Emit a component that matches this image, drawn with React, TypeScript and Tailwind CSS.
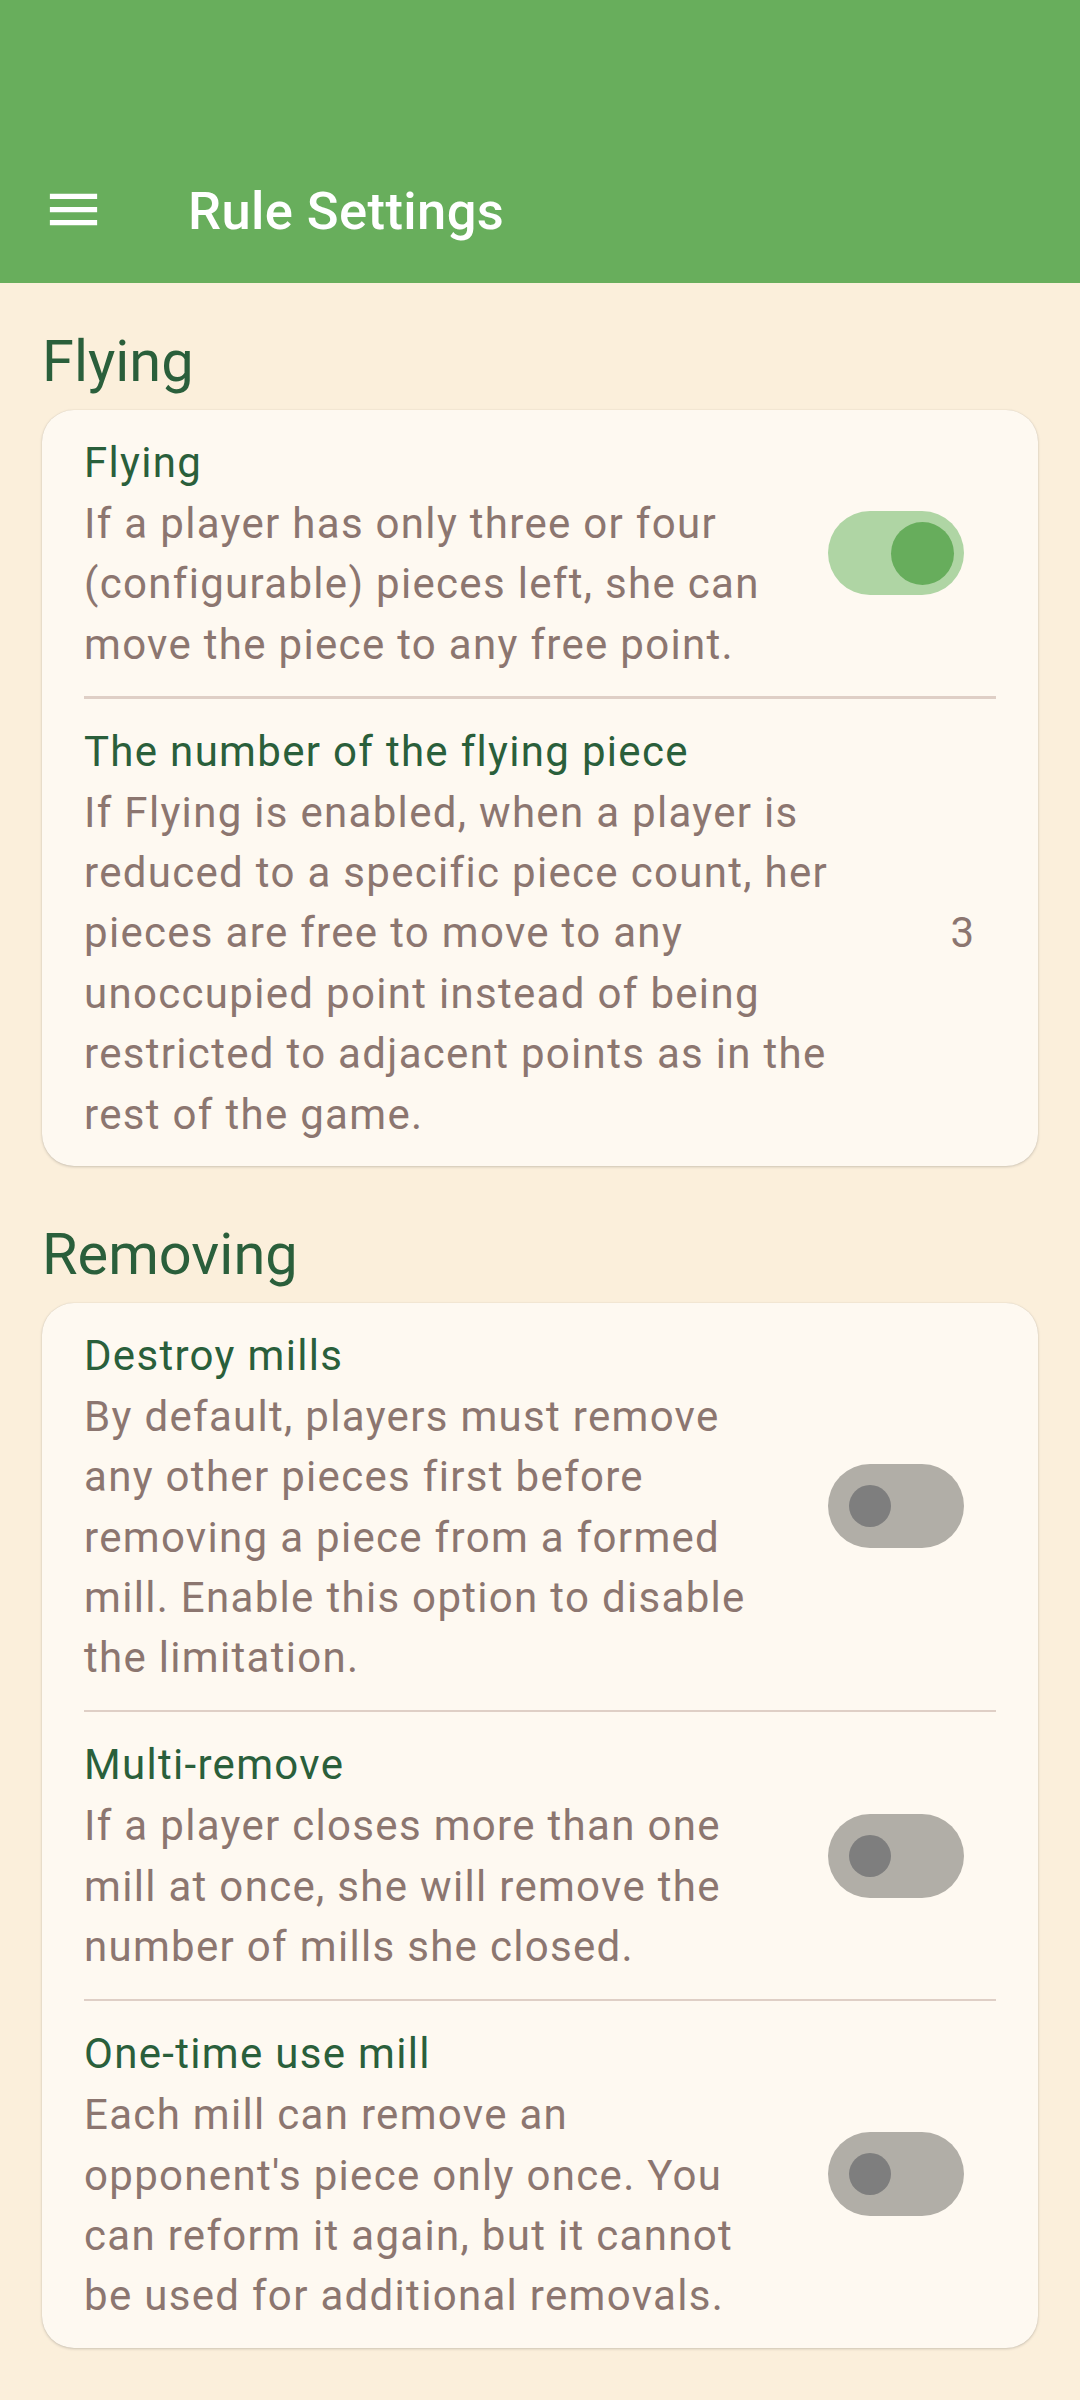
import { Fragment } from 'react'

type Setting = {
  title: string
  lines: string[]
  trailing: { kind: 'switch'; on: boolean } | { kind: 'value'; value: string }
}

type Section = {
  header: string
  items: Setting[]
}

const sections: Section[] = [
  {
    header: 'Flying',
    items: [
      {
        title: 'Flying',
        lines: [
          'If a player has only three or four',
          '(configurable) pieces left, she can',
          'move the piece to any free point.',
        ],
        trailing: { kind: 'switch', on: true },
      },
      {
        title: 'The number of the flying piece',
        lines: [
          'If Flying is enabled, when a player is',
          'reduced to a specific piece count, her',
          'pieces are free to move to any',
          'unoccupied point instead of being',
          'restricted to adjacent points as in the',
          'rest of the game.',
        ],
        trailing: { kind: 'value', value: '3' },
      },
    ],
  },
  {
    header: 'Removing',
    items: [
      {
        title: 'Destroy mills',
        lines: [
          'By default, players must remove',
          'any other pieces first before',
          'removing a piece from a formed',
          'mill. Enable this option to disable',
          'the limitation.',
        ],
        trailing: { kind: 'switch', on: false },
      },
      {
        title: 'Multi-remove',
        lines: [
          'If a player closes more than one',
          'mill at once, she will remove the',
          'number of mills she closed.',
        ],
        trailing: { kind: 'switch', on: false },
      },
      {
        title: 'One-time use mill',
        lines: [
          'Each mill can remove an',
          "opponent's piece only once. You",
          'can reform it again, but it cannot',
          'be used for additional removals.',
        ],
        trailing: { kind: 'switch', on: false },
      },
    ],
  },
]

function Toggle({ on }: { on: boolean }) {
  if (on) {
    return (
      <div className="flex h-[84px] w-[136px] items-center justify-end rounded-full bg-[#afd5a4] pr-[10.5px]">
        <div className="h-[63px] w-[63px] rounded-full bg-[#67ad5c]" />
      </div>
    )
  }
  return (
    <div className="flex h-[84px] w-[136px] items-center justify-start rounded-full bg-[#b1aea7] pl-[21px]">
      <div className="h-[42px] w-[42px] rounded-full bg-[#7e7e7e]" />
    </div>
  )
}

function SettingRow({ item }: { item: Setting }) {
  return (
    <div className="flex items-center px-[42px] py-[21px]">
      <div className="min-w-0 flex-1">
        <div className="text-[42px] leading-[63px] tracking-[1.31px] text-[#2a5f3b]">{item.title}</div>
        <div className="text-[42px] leading-[60.375px] tracking-[1.31px] text-[#8c7670]">
          {item.lines.map((line) => (
            <div key={line} className="whitespace-nowrap">
              {line}
            </div>
          ))}
        </div>
      </div>
      {item.trailing.kind === 'switch' ? (
        <div className="mr-[32px] shrink-0">
          <Toggle on={item.trailing.on} />
        </div>
      ) : (
        <div className="mr-[22px] shrink-0 text-[42px] leading-[63px] text-[#8c7670]">{item.trailing.value}</div>
      )}
    </div>
  )
}

function MenuIcon() {
  return (
    <svg viewBox="0 0 24 24" className="h-[63px] w-[63px]" fill="white">
      <path d="M3 18h18v-2H3v2zm0-5h18v-2H3v2zm0-7v2h18V6H3z" />
    </svg>
  )
}

export default function App() {
  return (
    <div className="min-h-[2400px] w-full bg-[#fbefdb] font-['Roboto','Noto_Sans',sans-serif]">
      <header className="flex h-[283px] flex-col justify-end bg-[#68ae5c]">
        <div className="flex h-[147px] items-center">
          <div className="ml-[42px] flex items-center">
            <MenuIcon />
          </div>
          <h1 className="ml-[83px] mt-[4px] text-[52.5px] font-medium leading-[63px] tracking-[0.4px] text-white">
            Rule Settings
          </h1>
        </div>
      </header>

      <main className="px-[42px]">
        {sections.map((section) => (
          <section key={section.header} className="pt-[44px]">
            <h2 className="mb-[14px] text-[57.75px] leading-[69px] text-[#2a5f3b]">{section.header}</h2>
            <div className="mb-[10px] overflow-hidden rounded-[32px] bg-[#fef9f1] shadow-[0_1px_3px_rgba(0,0,0,0.18),0_0_1px_rgba(0,0,0,0.14)]">
              {section.items.map((item, i) => (
                <Fragment key={item.title}>
                  {i > 0 && <div className="mx-[42px] h-[2.6px] bg-[#dfcfc6]" />}
                  <SettingRow item={item} />
                </Fragment>
              ))}
            </div>
          </section>
        ))}
      </main>
    </div>
  )
}
